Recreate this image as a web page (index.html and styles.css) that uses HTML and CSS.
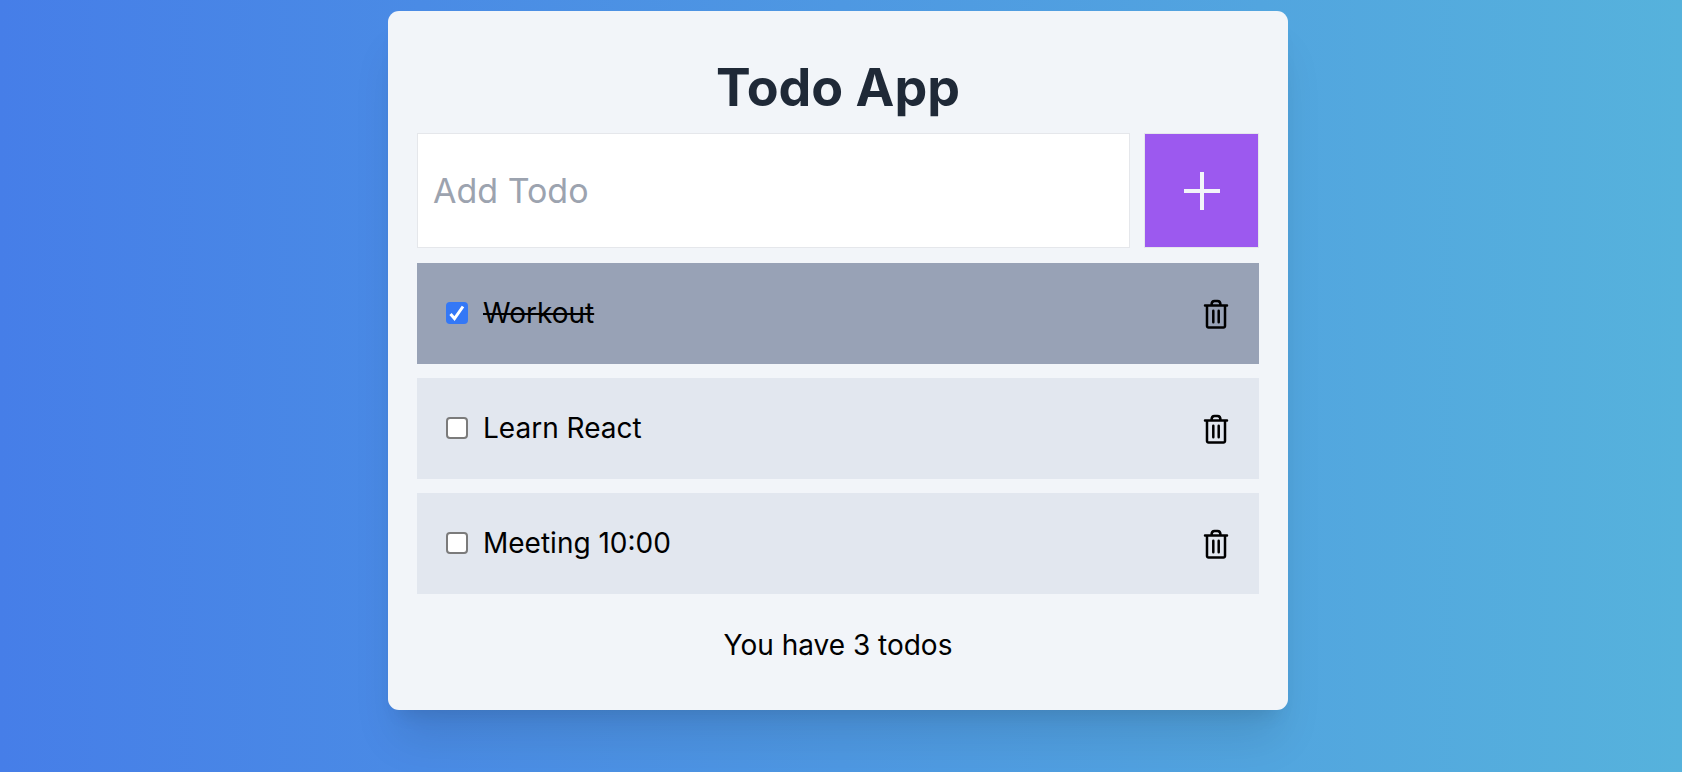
FILE: index.html
```html
<!DOCTYPE html>
<html lang="en">
<head>
<meta charset="utf-8">
<meta name="viewport" content="width=device-width, initial-scale=1">
<title>Todo App</title>
<link rel="stylesheet" href="styles.css">
</head>
<body>
<svg class="sprite" aria-hidden="true">
  <symbol id="trash" viewBox="0 0 28 32">
    <path d="M5 7.500V28a1.500 1.500 0 0 0 1.500 1.500h15a1.500 1.500 0 0 0 1.500-1.500V7.500M3 7.500h22M9.500 7c0-2.500 1-4 3-4h3c2 0 3 1.500 3 4M11.300 12.800v11.400M16.700 12.800v11.400" fill="none" stroke="currentColor" stroke-width="2.500" stroke-linecap="round" stroke-linejoin="round"/>
  </symbol>
</svg>
<main class="card">
  <h1 class="title">Todo App</h1>
  <form class="add-form">
    <input class="add-input" type="text" placeholder="Add Todo" aria-label="Add Todo">
    <button class="add-button" type="button" aria-label="Add">
      <svg class="plus" viewBox="0 0 38 38" aria-hidden="true"><path d="M1 19h36M19 0v38" stroke="currentColor" stroke-width="4"/></svg>
    </button>
  </form>
  <ul class="todos">
    <li class="todo done">
      <label class="todo-label"><input class="check" type="checkbox" checked><span>Workout</span></label>
      <button class="delete" type="button" aria-label="Delete Workout"><svg class="trash"><use href="#trash"/></svg></button>
    </li>
    <li class="todo">
      <label class="todo-label"><input class="check" type="checkbox"><span>Learn React</span></label>
      <button class="delete" type="button" aria-label="Delete Learn React"><svg class="trash"><use href="#trash"/></svg></button>
    </li>
    <li class="todo">
      <label class="todo-label"><input class="check" type="checkbox"><span>Meeting 10:00</span></label>
      <button class="delete" type="button" aria-label="Delete Meeting 10:00"><svg class="trash"><use href="#trash"/></svg></button>
    </li>
  </ul>
  <p class="count">You have 3 todos</p>
</main>
</body>
</html>
```
FILE: styles.css
```css
* { box-sizing: border-box; }
body {
  margin: 0;
  min-height: 100vh;
  padding: 11px 22px 11px 16px;
  font-family: Inter, "Liberation Sans", sans-serif;
  font-size: 28px;
  line-height: 43px;
  color: #000;
  background: linear-gradient(to right, #467ee8, #56b2dc);
}
.sprite { display: none; }
.card {
  max-width: 900px;
  margin: 0 auto;
  padding: 44px 29px 43px;
  border-radius: 11px;
  background: #f2f5f9;
  box-shadow: 0 36px 45px -9px rgba(0, 0, 0, .1), 0 14px 18px -11px rgba(0, 0, 0, .1);
}
.title {
  margin: 0 0 13px;
  font-size: 52px;
  line-height: 65px;
  font-weight: 700;
  text-align: center;
  color: #1f2937;
}
.add-form { display: flex; gap: 14px; margin-bottom: 15px; }
.add-input {
  flex: 1;
  min-width: 0;
  height: 115px;
  padding: 0 15px;
  border: 1px solid #e5e7eb;
  font: inherit;
  font-size: 34px;
  background: #fff;
}
.add-input::placeholder { color: #9ca3af; opacity: 1; }
.add-button {
  display: grid;
  place-items: center;
  width: 115px;
  height: 115px;
  padding: 0;
  border: 1px solid #e5e7eb;
  background: #9c59ef;
  color: #f2f5f9;
}
.plus { width: 38px; height: 38px; }
.todos { display: grid; gap: 14px; margin: 0; padding: 0; list-style: none; }
.todo {
  display: flex;
  align-items: center;
  justify-content: space-between;
  padding: 29px;
  background: #e2e7ef;
}
.done { background: #98a2b6; }
.done span { text-decoration: line-through; }
.todo-label { display: flex; align-items: center; gap: 15px; }
.check {
  appearance: none;
  width: 22px;
  height: 22px;
  margin: 0 0 2px;
  border: 2px solid #7b7b7b;
  border-radius: 4px;
  background: #fff;
}
.check:checked {
  border: 0;
  background: #3478f6 url("data:image/svg+xml,%3Csvg xmlns='http://www.w3.org/2000/svg' viewBox='0 0 22 22'%3E%3Cpath d='M4.500 12l4 4.500 8.500-12' fill='none' stroke='white' stroke-width='3'/%3E%3C/svg%3E");
}
.delete { display: flex; padding: 0; border: 0; background: none; color: #000; }
.trash { width: 28px; height: 32px; }
.count { margin: 30px 0 0; text-align: center; }
```
